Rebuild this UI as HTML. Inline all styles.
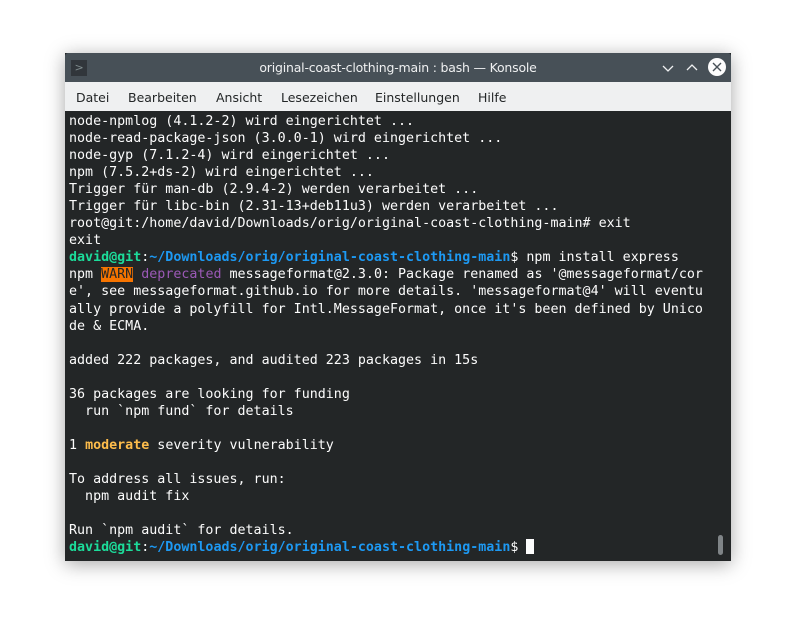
<!DOCTYPE html>
<html><head><meta charset="utf-8"><style>
html,body{margin:0;padding:0;width:796px;height:639px;background:#fff;overflow:hidden}
.win{position:absolute;left:65px;top:53px;width:666px;height:508px;box-shadow:0 3px 18px rgba(0,0,0,.35);background:#232627}
.title{position:absolute;left:0;top:0;width:666px;height:29px;background:#475057;border-radius:3px 3px 0 0;color:#eff0f1;font:12.5px "DejaVu Sans","Liberation Sans",sans-serif;text-align:center;line-height:30px;letter-spacing:-0.2px}
.icon{position:absolute;left:6px;top:7px;width:16px;height:16px;background:#31363b;color:#7f8c8d;font-size:11px;line-height:16px;text-align:center}
.menu{position:absolute;left:0;top:29px;width:666px;height:29px;background:#eff0f1;font:12.5px "DejaVu Sans","Liberation Sans",sans-serif;color:#232627;line-height:32px}
.menu span{position:absolute;top:0}
.term{position:absolute;left:4px;top:60px;margin:0;font:13.33px/17.04px "DejaVu Sans Mono","Liberation Mono",monospace;color:#fcfcfc;white-space:pre}
.g{color:#1cdc9a;font-weight:bold}.b{color:#1d99f3;font-weight:bold}
.w{background:#f67400;color:#232627}.p{color:#9b59b6}.y{color:#fdbc4b;font-weight:bold}
.cur{display:inline-block;width:8px;height:15px;background:#fcfcfc;vertical-align:-3px}
.sb{position:absolute;left:653px;top:482px;width:5px;height:20px;border-radius:3px;background:#7f8487}
</style></head><body>
<div class="win">
<div class="title"><div class="icon">&gt;</div>original-coast-clothing-main : bash — Konsole
<svg style="position:absolute;left:596px;top:8px" width="14" height="14"><path d="M2 5 L7 10 L12 5" stroke="#eff0f1" stroke-width="1.3" fill="none"/></svg>
<svg style="position:absolute;left:620px;top:8px" width="14" height="14"><path d="M2 9 L7 4 L12 9" stroke="#eff0f1" stroke-width="1.3" fill="none"/></svg>
<svg style="position:absolute;left:642px;top:4px" width="20" height="20"><circle cx="10" cy="10" r="9" fill="#fcfcfc"/><path d="M6 6 L14 14 M14 6 L6 14" stroke="#475057" stroke-width="1.4"/></svg>
</div>
<div class="menu"><span style="left:11px">Datei</span><span style="left:63px">Bearbeiten</span><span style="left:151px">Ansicht</span><span style="left:216px">Lesezeichen</span><span style="left:310px">Einstellungen</span><span style="left:413px">Hilfe</span></div>
<pre class="term">node-npmlog (4.1.2-2) wird eingerichtet ...
node-read-package-json (3.0.0-1) wird eingerichtet ...
node-gyp (7.1.2-4) wird eingerichtet ...
npm (7.5.2+ds-2) wird eingerichtet ...
Trigger für man-db (2.9.4-2) werden verarbeitet ...
Trigger für libc-bin (2.31-13+deb11u3) werden verarbeitet ...
root@git:/home/david/Downloads/orig/original-coast-clothing-main# exit
exit
<span class="g">david@git</span>:<span class="b">~/Downloads/orig/original-coast-clothing-main</span>$ npm install express
npm <span class="w">WARN</span> <span class="p">deprecated</span> messageformat@2.3.0: Package renamed as '@messageformat/cor
e', see messageformat.github.io for more details. 'messageformat@4' will eventu
ally provide a polyfill for Intl.MessageFormat, once it's been defined by Unico
de &amp; ECMA.

added 222 packages, and audited 223 packages in 15s

36 packages are looking for funding
  run `npm fund` for details

1 <span class="y">moderate</span> severity vulnerability

To address all issues, run:
  npm audit fix

Run `npm audit` for details.
<span class="g">david@git</span>:<span class="b">~/Downloads/orig/original-coast-clothing-main</span>$ <span class="cur"></span></pre>
<div class="sb"></div>
</div>
</body></html>
